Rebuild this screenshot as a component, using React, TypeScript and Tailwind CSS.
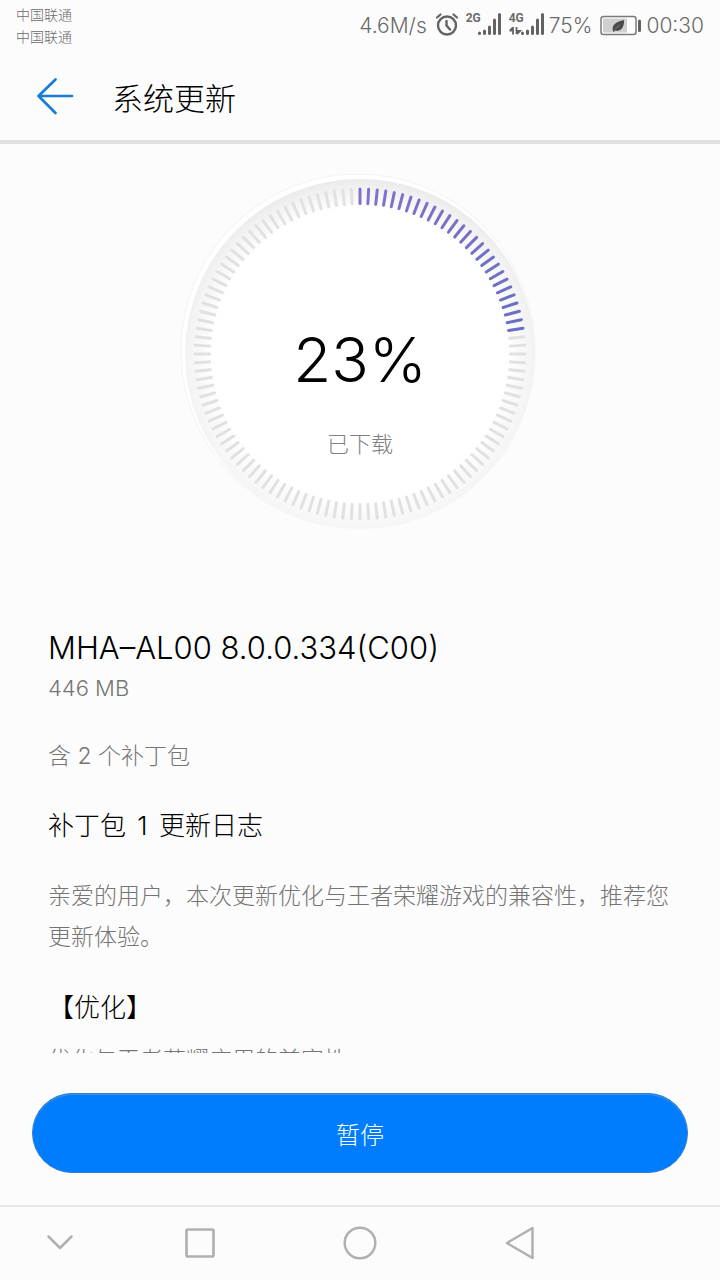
import React from 'react';

const TICKS = 120;

const AlarmIcon: React.FC = () => (
  <svg viewBox="0 0 24 24" className="h-6 w-6" fill="none" stroke="#636363" strokeLinecap="round" aria-hidden="true">
    <circle cx="12" cy="13.5" r="9" strokeWidth="2.4" />
    <path d="M11.5 9v4.5l3.5 4" strokeWidth="2.4" />
    <path d="M2 5.5l3.5-3M22 5.5l-3.5-3" strokeWidth="2.2" />
  </svg>
);

interface SignalProps {
  label: string;
  arrows?: boolean;
}

const Signal: React.FC<SignalProps> = ({ label, arrows }) => (
  <div className="relative h-6 w-9">
    <span className="absolute left-0 top-0 font-['Roboto',sans-serif] text-[12px] font-bold leading-[12px]">{label}</span>
    <svg viewBox="0 12 36 24" className="h-6 w-9" fill="none" stroke="#636363" aria-hidden="true">
      {arrows ? (
        <path d="M.5 30.5h3.5v4M4 27v7.5M4 27.5l-3 3M7.5 27v7M7.5 31h3.5l-3 3" strokeWidth="1.8" />
      ) : null}
      <path
        d="M13.5 33v.5M18.5 31v2.5M23.5 27v6.5M28.5 20v13.5M33.5 14.5v19"
        strokeWidth="3"
        strokeLinecap="round"
      />
    </svg>
  </div>
);

const BatteryIcon: React.FC = () => (
  <svg viewBox="0 0 42 22" className="h-[22px] w-[42px]" fill="none" aria-hidden="true">
    <rect x="1" y="1.5" width="35" height="18" rx="2.5" stroke="#7a7a7a" strokeWidth="1.5" />
    <rect x="3" y="3.5" width="24" height="14" fill="#d0d0d0" />
    <path d="M13 16C11.5 10 15.5 7 24 5c.5 7-3 12-9 10.5L13.5 17z" fill="#4a4a4a" />
    <path d="M15 14.5c1.5-2 3-3.5 5-4.7" stroke="#a0a0a0" strokeWidth=".6" />
    <path d="M39.5 6v9.5" stroke="#636363" strokeWidth="3" strokeLinecap="round" />
  </svg>
);

const StatusBar: React.FC = () => (
  <div className="flex h-12 items-start justify-between px-4 text-[#6b6b6b]">
    <div className="pt-1 text-sm leading-[22px]">
      <p>中国联通</p>
      <p>中国联通</p>
    </div>
    <div className="flex h-12 items-center pt-1 text-[21px] font-light">
      <span>4.6M/s</span>
      <div className="ml-2 mr-1 flex items-center gap-[7px] pb-1">
        <AlarmIcon />
        <Signal label="2G" />
        <Signal label="4G" arrows />
      </div>
      <span>75%</span>
      <span className="ml-2 mr-1">
        <BatteryIcon />
      </span>
      <span>00:30</span>
    </div>
  </div>
);

const ProgressDial: React.FC<{ percent: number }> = ({ percent }) => {
  const filled = Math.ceil((TICKS * percent) / 100);

  return (
    <div className="relative mx-auto h-[364px] w-[360px]">
      <svg viewBox="0 0 360 364" className="h-full w-full" fill="none" aria-hidden="true">
        <defs>
          <linearGradient id="rim" x1="0" y1="0" x2="0" y2="1">
            <stop offset="0" stopColor="#ebebeb" />
            <stop offset=".5" stopColor="#f3f3f3" />
            <stop offset="1" stopColor="#f6f6f6" />
          </linearGradient>
          <radialGradient id="face">
            <stop offset=".84" stopColor="#fff" />
            <stop offset="1" stopColor="#fff" stopOpacity="0" />
          </radialGradient>
          <linearGradient id="bar" x1="180" y1="16" x2="345" y2="160" gradientUnits="userSpaceOnUse">
            <stop offset="0" stopColor="#8570cb" />
            <stop offset="1" stopColor="#6670c4" />
          </linearGradient>
        </defs>
        <circle cx="178" cy="179" r="177" fill="#fff" stroke="#f6f6f6" strokeWidth="1.5" />
        <circle cx="180" cy="182" r="175" fill="url(#rim)" />
        <circle cx="180" cy="182" r="174" fill="url(#face)" />
        {Array.from({ length: TICKS }, (_, i) => {
          const angle = (i * 2 * Math.PI) / TICKS;
          const sin = Math.sin(angle);
          const cos = Math.cos(angle);
          return (
            <path
              key={i}
              d={`M${180 + 150.5 * sin} ${182 - 150.5 * cos}L${180 + 165 * sin} ${182 - 165 * cos}`}
              stroke={i < filled ? 'url(#bar)' : '#e1e1e1'}
              strokeWidth="3"
              strokeLinecap="round"
            />
          );
        })}
      </svg>
      <div className="absolute inset-0 flex flex-col items-center pt-[148px]">
        <p className="text-[62px] font-light leading-[80px] text-black">{percent}%</p>
        <p className="mt-6 text-[22px] leading-10 text-[#808080]">已下载</p>
      </div>
    </div>
  );
};

const NavBar: React.FC = () => (
  <nav className="grid h-[75px] shrink-0 grid-cols-[3fr_4fr_4fr_4fr_3fr] border-t-2 border-[#e5e5e5] pb-0.5">
    <button type="button" aria-label="Hide" className="flex items-center justify-center">
      <svg viewBox="0 0 36 36" className="h-9 w-9" fill="none" stroke="#b0b0b0" strokeWidth="2.5" strokeLinecap="round" strokeLinejoin="round">
        <path d="M6.5 11.5L18 23 29.5 11.5" />
      </svg>
    </button>
    <button type="button" aria-label="Recent" className="flex items-center justify-center">
      <svg viewBox="0 0 36 36" className="h-9 w-9" fill="none" stroke="#b0b0b0" strokeWidth="2.7">
        <rect x="4.5" y="4.5" width="27" height="27" rx="1.5" />
      </svg>
    </button>
    <button type="button" aria-label="Home" className="flex items-center justify-center">
      <svg viewBox="0 0 36 36" className="h-9 w-9" fill="none" stroke="#b0b0b0" strokeWidth="2.5">
        <circle cx="18" cy="18" r="15.3" />
      </svg>
    </button>
    <button type="button" aria-label="Back" className="flex items-center justify-center">
      <svg viewBox="0 0 36 36" className="h-9 w-9" fill="none" stroke="#b0b0b0" strokeWidth="2.5" strokeLinejoin="round">
        <path d="M5 18L30.5 3v30z" />
      </svg>
    </button>
  </nav>
);

const App: React.FC = () => {
  return (
    <div className="flex h-screen flex-col bg-[#fcfcfc] font-['Inter','Noto_Sans_CJK_SC',sans-serif] font-light">
      <StatusBar />
      <header className="flex h-24 shrink-0 items-center border-b-4 border-[#e1e1e1] px-9 pt-1">
        <button type="button" aria-label="返回">
          <svg viewBox="0 0 38 38" className="h-[38px] w-[38px]" fill="none" stroke="#1a7bd9" strokeWidth="2.7" strokeLinecap="round" strokeLinejoin="round">
            <path d="M36 19H2.5M19.5 2.5L2.5 19l17 17" />
          </svg>
        </button>
        <h1 className="ml-[38px] pt-1.5 text-[31px] font-light text-black">系统更新</h1>
      </header>

      <main className="min-h-0 flex-1 overflow-hidden pt-7">
        <ProgressDial percent={23} />
        <section className="mt-[92px] px-12 text-[23px] leading-10 text-[#757575]">
          <h2 className="text-[31px] font-light leading-10 text-black">MHA–AL00 8.0.0.334(C00)</h2>
          <p className="text-[22px]">446 MB</p>
          <p className="mt-7">含 2 个补丁包</p>
          <h3 className="mt-[30px] text-[26px] font-light leading-10 text-black">
            补丁包 <span className="mx-1">1</span> 更新日志
          </h3>
          <p className="mt-[30px] leading-[41px]">亲爱的用户，本次更新优化与王者荣耀游戏的兼容性，推荐您更新体验。</p>
          <h3 className="mt-[30px] text-[26px] font-light leading-10 text-black">【优化】</h3>
          <p className="mt-3">优化与王者荣耀应用的兼容性</p>
        </section>
      </main>

      <footer className="shrink-0 px-8 pb-8 pt-10">
        <button
          type="button"
          className="h-20 w-full rounded-full border border-[#2f7fd0] bg-[#007dff] pt-1.5 text-2xl font-light text-white shadow-[inset_0_1px_0_#3d93ea]"
        >
          暂停
        </button>
      </footer>
      <NavBar />
    </div>
  );
};

export default App;
